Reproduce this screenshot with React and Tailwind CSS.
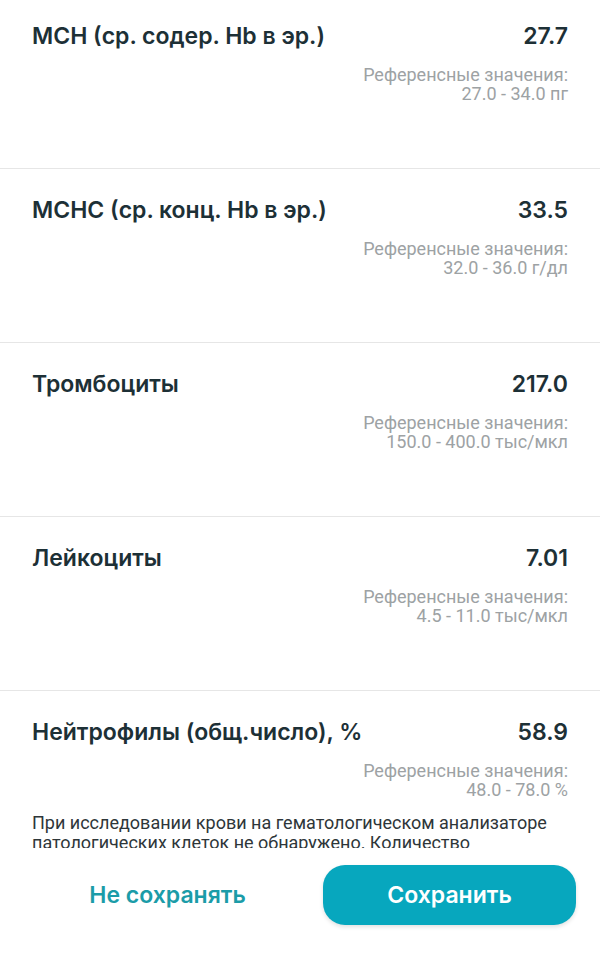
const rows = [
  { name: 'MCH (ср. содер. Hb в эр.)', value: '27.7', range: '27.0 - 34.0 пг' },
  { name: 'MCHC (ср. конц. Hb в эр.)', value: '33.5', range: '32.0 - 36.0 г/дл' },
  { name: 'Тромбоциты', value: '217.0', range: '150.0 - 400.0 тыс/мкл' },
  { name: 'Лейкоциты', value: '7.01', range: '4.5 - 11.0 тыс/мкл' },
  { name: 'Нейтрофилы (общ.число), %', value: '58.9', range: '48.0 - 78.0 %' },
];

function ResultRow({ row, first, last }) {
  return (
    <div
      className={
        (first ? 'h-[169px] pt-[22px] ' : 'h-[174px] pt-[27px] ') +
        (last ? 'h-auto ' : 'border-b border-[#e6e6e6] ') +
        'px-8'
      }
    >
      <div className="flex items-center justify-between text-[23px] leading-[28px] font-semibold text-[#1d3036]">
        <span>{row.name}</span>
        <span>{row.value}</span>
      </div>
      <div className="mt-[15px] text-right text-[18px] leading-[19px] text-[#9da2a4] font-['Roboto',sans-serif]">
        <div>Референсные значения:</div>
        <div>{row.range}</div>
      </div>
    </div>
  );
}

export default function App() {
  return (
    <div className="w-[600px] h-[955px] bg-white flex flex-col font-['Inter',sans-serif] overflow-hidden">
      <div className="h-[848px] overflow-hidden">
        {rows.map((r, i) => (
          <ResultRow key={r.name} row={r} first={i === 0} last={i === rows.length - 1} />
        ))}
        <p className="px-8 mt-[14px] text-[18px] leading-[20px] text-[#2e3639] font-['Roboto',sans-serif]">
          При исследовании крови на гематологическом анализаторе патологических клеток не обнаружено. Количество
          лейкоцитов и формула в пределах нормы.
        </p>
      </div>
      <div className="flex items-center gap-3 px-6 pt-[17px]">
        <button className="flex-1 h-[60px] text-[23px] font-semibold text-[#1b9ca8]">Не сохранять</button>
        <button className="w-[253px] h-[60px] rounded-[22px] bg-[#07a7be] text-[23px] font-semibold text-white shadow-[0_2px_4px_rgba(0,0,0,0.12)]">
          Сохранить
        </button>
      </div>
    </div>
  );
}
